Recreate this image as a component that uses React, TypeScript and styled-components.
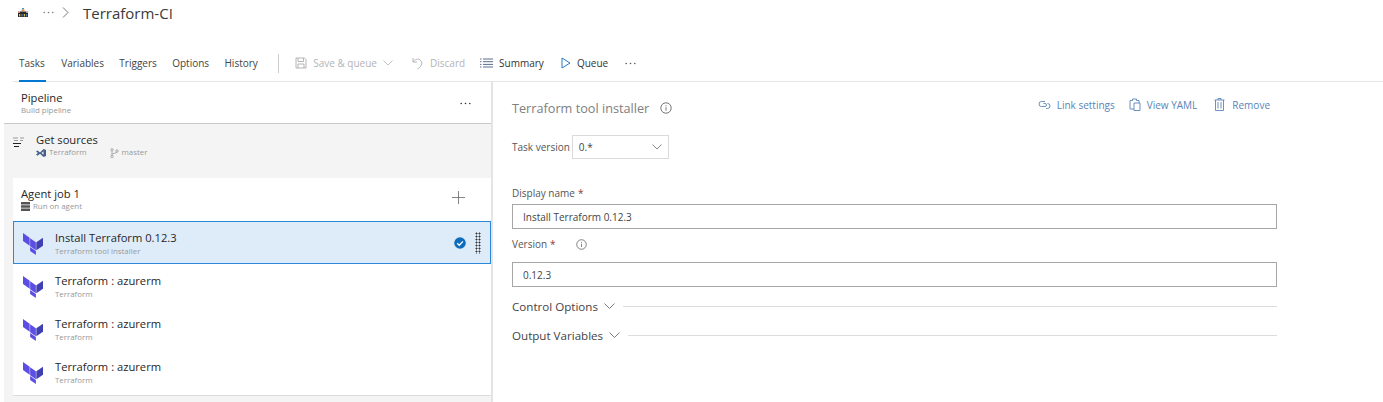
import React from "react";
import styled, { createGlobalStyle } from "styled-components";

const Global = createGlobalStyle`
  html, body { margin: 0; padding: 0; background: #fff; overflow: hidden; }
  body { font-family: "Open Sans", "Noto Sans", sans-serif; color: #333; }
`;

const Page = styled.div`
  width: 1383px;
  height: 402px;
  display: flex;
  flex-direction: column;
  overflow: hidden;
`;

const TitleBar = styled.div`
  height: 25px;
  padding-left: 18px;
  display: flex;
  align-items: center;
`;

const Crumbs = styled.div`
  display: flex;
  align-items: center;
  color: #777;
  gap: 15px;
`;

const CrumbArrow = styled.svg`
  margin-left: 8px;
`;

const Title = styled.h1`
  margin: 0 0 0 14px;
  font-size: 15px;
  font-weight: 400;
  color: #3a3a3a;
`;

const Toolbar = styled.div`
  margin: 25px 0 0 13px;
  height: 31px;
  border-bottom: 1px solid #e6e6e6;
  display: flex;
  align-items: center;
  font-size: 10px;
`;

const Tab = styled.div<{ $active?: boolean }>`
  height: 100%;
  margin: 0 7.4px -1px 6px;
  padding: 0 0 5px;
  display: flex;
  align-items: center;
  color: #444;
  box-sizing: border-box;
  border-bottom: ${(p) => (p.$active ? "2px solid #0078d4" : "2px solid transparent")};
  &:not(:first-child) { margin-left: 8px; }
  &:first-child { padding-right: 1px; }
`;

const Divider = styled.div`
  width: 1px;
  height: 19px;
  background: #ccc;
  margin: 0 16px 5px 13px;
`;

const Action = styled.div<{ $off?: boolean; $after: number }>`
  display: flex;
  align-items: center;
  gap: 6px;
  margin: 0 ${(p) => p.$after}px 5px 0;
  color: ${(p) => (p.$off ? "#b4b4b4" : "#333")};
`;

const MoreDots = styled.div`
  display: flex;
  margin-bottom: 5px;
`;

const Body = styled.div`
  flex: 1;
  display: grid;
  grid-template-columns: 493px 1fr;
  min-height: 0;
`;

const Left = styled.div`
  margin-left: 4px;
  background: #f4f4f4;
  border-right: 2px solid #e4e4e4;
  display: flex;
  flex-direction: column;
`;

const PipelineHead = styled.div`
  height: 42px;
  padding: 2px 20px 0 17px;
  box-sizing: border-box;
  background: #fff;
  border-bottom: 1px solid #c8c8c8;
  display: flex;
  align-items: center;
  justify-content: space-between;
`;

const Name = styled.div`
  font-size: 11.2px;
  line-height: 14px;
  color: #262626;
`;

const Sub = styled.div`
  font-size: 7.9px;
  line-height: 11px;
  color: #999;
  display: flex;
  align-items: center;
  gap: 3px;
`;

const Sources = styled.div`
  height: 54px;
  padding: 9px 0 0 9px;
  box-sizing: border-box;
  display: flex;
  gap: 12px;
`;

const SourceIcon = styled.svg`
  margin-top: 4px;
`;

const SourceMeta = styled.div`
  display: flex;
  gap: 23px;
`;

const Job = styled.div`
  margin-left: 9px;
  padding-bottom: 2px;
  background: #fff;
  border-bottom: 1px solid #dcdcdc;
`;

const JobHead = styled.div`
  height: 43px;
  padding: 0 26px 0 8px;
  box-sizing: border-box;
  display: flex;
  align-items: center;
  justify-content: space-between;
`;

const PlusIcon = styled.svg`
  margin-bottom: 4px;
`;

const TaskRow = styled.div<{ $selected?: boolean }>`
  height: 43px;
  box-sizing: border-box;
  padding-left: 9px;
  display: flex;
  align-items: center;
  gap: 12px;
  background: ${(p) => (p.$selected ? "#deecf9" : "#fff")};
  border: 1px solid ${(p) => (p.$selected ? "#2b88d8" : "transparent")};
`;

const TaskIcon = styled.svg`
  margin-top: 2px;
`;

const TaskText = styled.div`
  flex: 1;
  margin-top: 3px;
  ${Sub} { margin-top: 1px; }
`;

const Grip = styled.div`
  width: 6px;
  height: 22px;
  margin: 0 9px 0 -3px;
  background-image: radial-gradient(circle, #333 0.9px, transparent 1.1px);
  background-size: 3px 3px;
`;

const Right = styled.div`
  padding: 0 106px 0 19px;
  display: flex;
  flex-direction: column;
`;

const RightHead = styled.div`
  height: 53px;
  padding-bottom: 2px;
  box-sizing: border-box;
  display: flex;
  align-items: center;
  justify-content: space-between;
`;

const PanelTitle = styled.div`
  font-size: 12.7px;
  color: #808080;
  display: flex;
  align-items: center;
  gap: 11px;
`;

const Links = styled.div`
  display: flex;
  gap: 14px;
  margin: -6px 7px 0 0;
`;

const LinkItem = styled.div`
  display: flex;
  align-items: center;
  gap: 6px;
  font-size: 10px;
  color: #5a84b8;
  &:last-child { margin-left: 3px; }
`;

const VersionRow = styled.div`
  display: flex;
  align-items: center;
  gap: 2px;
  font-size: 10px;
  color: #555;
`;

const Select = styled.div`
  width: 97px;
  height: 24px;
  box-sizing: border-box;
  border: 1px solid #dadada;
  padding: 0 6px;
  display: flex;
  align-items: center;
  justify-content: space-between;
  color: #444;
`;

const Label = styled.div<{ $top: number }>`
  margin-top: ${(p) => p.$top}px;
  height: 14px;
  font-size: 10px;
  color: #555;
  display: flex;
  align-items: center;
  gap: 3px;
`;

const Star = styled.span`
  color: #8a3a40;
`;

const LabelInfo = styled.span`
  display: flex;
  margin-left: 17px;
`;

const Input = styled.div<{ $top: number }>`
  margin-top: ${(p) => p.$top}px;
  height: 25px;
  box-sizing: border-box;
  border: 1px solid #a6a6a6;
  padding: 0 10px;
  font-size: 10px;
  color: #444;
  display: flex;
  align-items: center;
`;

const Section = styled.div<{ $top: number }>`
  margin-top: ${(p) => p.$top}px;
  height: 16px;
  display: flex;
  align-items: center;
  gap: 6px;
  font-size: 11.6px;
  color: #444;
  &::after {
    content: "";
    flex: 1;
    height: 1px;
    margin-left: 2px;
    background: #ddd;
  }
`;

const TerraformIcon = () => (
  <TaskIcon width="20" height="22" viewBox="0.5 2.5 21 19" preserveAspectRatio="none">
    <path d="M0.500 2.500l7 4v7l-7-4z" fill="#5c4ee5" />
    <path d="M8 7l6 3.500v7L8 14z" fill="#5c4ee5" />
    <path d="M8 14.500l6 3.500v3.500L8 18z" fill="#5c4ee5" />
    <path d="M14.500 10.500l7-4v7l-7 4z" fill="#4040b2" />
  </TaskIcon>
);

const Chevron = ({ size = 10, color = "#666" }: { size?: number; color?: string }) => (
  <svg width={size} height={size * 0.6} viewBox="0 0 10 6" fill="none" stroke={color} strokeWidth="0.8">
    <path d="M0.500 0.500L5 5l4.500-4.500" />
  </svg>
);

const Info = ({ size = 12 }: { size?: number }) => (
  <svg width={size} height={size} viewBox="0 0 12 12" fill="none" stroke="#666" strokeWidth="0.9">
    <circle cx="6" cy="6" r="5.200" />
    <path d="M6 5.200v3.400M6 3.200v1" />
  </svg>
);

const Dots = ({ color = "#555" }: { color?: string }) => (
  <svg width="11" height="3" viewBox="0 0 11 3" fill={color}>
    <circle cx="1.200" cy="1.500" r="0.800" />
    <circle cx="5.500" cy="1.500" r="0.800" />
    <circle cx="9.800" cy="1.500" r="0.800" />
  </svg>
);

const OrgIcon = () => (
  <svg width="10" height="10" viewBox="0 0 10 10">
    <path d="M4 0h2v1.500H4z" fill="#4a90d0" />
    <path d="M3.500 1.500h3V3h-3z" fill="#e0954a" />
    <path d="M0 3h1v2H0zM9 3h1v2H9z" fill="#d9a0a0" />
    <path d="M1.500 3.500h7V5h-7zM0 5h10v4H0z" fill="#2a2622" />
    <path d="M1 6h1.300v2.500H1zM5.800 6h1.300v2.500H5.800z" fill="#e0b83c" />
    <path d="M3.300 6h1.300v2.500H3.300zM8 6h1.300v2.500H8z" fill="#3f7fc4" />
  </svg>
);

const App: React.FC = () => {
  return (
    <Page>
      <Global />
      <TitleBar>
        <Crumbs>
          <OrgIcon />
          <Dots color="#777" />
        </Crumbs>
        <CrumbArrow width="7" height="11" viewBox="0 0 7 11" fill="none" stroke="#777">
          <path d="M1 0.500l5 5-5 5" />
        </CrumbArrow>
        <Title>Terraform-CI</Title>
      </TitleBar>
      <Toolbar>
        <Tab $active>Tasks</Tab>
        <Tab>Variables</Tab>
        <Tab>Triggers</Tab>
        <Tab>Options</Tab>
        <Tab>History</Tab>
        <Divider />
        <Action $off $after={19}>
          <svg width="12" height="12" viewBox="0 0 12 12" fill="none" stroke="#b4b4b4">
            <path d="M1 1h8.500L11 2.500V11H1zM3 1v3.500h5.500V1M3 11V7h6v4" />
          </svg>
          Save &amp; queue
          <Chevron color="#b4b4b4" />
        </Action>
        <Action $off $after={15}>
          <svg width="12" height="13" viewBox="0 0 12 13" fill="none" stroke="#b4b4b4">
            <path d="M1 1v4h4M1 5c2-3 5-3.500 7-2 3 2 2.500 6-2.500 9" />
          </svg>
          Discard
        </Action>
        <Action $after={17}>
          <svg width="13" height="10" viewBox="0 0 13 10" stroke="#5a6f8a" strokeWidth="1">
            <path d="M0 1h1.500M3 1h10M0 3.700h1.500M3 3.700h10M0 6.400h1.500M3 6.400h10M0 9h1.500M3 9h10" />
          </svg>
          Summary
        </Action>
        <Action $after={17}>
          <svg width="10" height="12" viewBox="0 0 10 12" fill="none" stroke="#2b78c2">
            <path d="M1 1l8 5-8 5z" />
          </svg>
          Queue
        </Action>
        <MoreDots>
          <Dots />
        </MoreDots>
      </Toolbar>
      <Body>
        <Left>
          <PipelineHead>
            <div>
              <Name>Pipeline</Name>
              <Sub>Build pipeline</Sub>
            </div>
            <Dots color="#333" />
          </PipelineHead>
          <Sources>
            <SourceIcon width="11" height="11" viewBox="0 0 11 11" stroke="#222" strokeWidth="1">
              <path d="M0 1h5M7 1h4M1 3.500h4M7 3.500h3" stroke="#999" />
              <path d="M0 6.500h8M1 9.500h5" />
            </SourceIcon>
            <div>
              <Name>Get sources</Name>
              <SourceMeta>
                <Sub>
                  <svg width="10" height="8" viewBox="0 0 10 8" fill="#44608c">
                    <path d="M0 2.500l1.500-1L4 3.500 7.500 0 10 1v6L7.500 8 4 4.700 1.500 6.700 0 5.500 2 4zM7.500 2.200L5.500 4l2 1.800z" />
                  </svg>
                  Terraform
                </Sub>
                <Sub>
                  <svg width="9" height="10" viewBox="0 0 9 10" fill="none" stroke="#999" strokeWidth="0.8">
                    <circle cx="2" cy="1.800" r="1.200" />
                    <circle cx="2" cy="8.500" r="1.200" />
                    <circle cx="7" cy="3" r="1.200" />
                    <path d="M2 3v4.200M2 6.500c0-1.500 5-1 5-2.500" />
                  </svg>
                  master
                </Sub>
              </SourceMeta>
            </div>
          </Sources>
          <Job>
            <JobHead>
              <div>
                <Name>Agent job 1</Name>
                <Sub>
                  <svg width="9" height="9" viewBox="0 0 9 9" fill="#555">
                    <path d="M0 0h9v2.500H0zM0 3.200h9v2.500H0zM0 6.500h9V9H0z" />
                  </svg>
                  Run on agent
                </Sub>
              </div>
              <PlusIcon width="13" height="13" viewBox="0 0 13 13" stroke="#666" strokeWidth="0.8">
                <path d="M6.500 0v13M0 6.500h13" />
              </PlusIcon>
            </JobHead>
            <TaskRow $selected>
              <TerraformIcon />
              <TaskText>
                <Name>Install Terraform 0.12.3</Name>
                <Sub>Terraform tool installer</Sub>
              </TaskText>
              <svg width="12" height="12" viewBox="0 0 13 13">
                <circle cx="6.500" cy="6.500" r="6.300" fill="#0f6cbd" />
                <path d="M3.500 6.800l2.200 2.200 4-4.300" fill="none" stroke="#fff" strokeWidth="1.400" />
              </svg>
              <Grip />
            </TaskRow>
            {[0, 1, 2].map((i) => (
              <TaskRow key={i}>
                <TerraformIcon />
                <TaskText>
                  <Name>Terraform : azurerm</Name>
                  <Sub>Terraform</Sub>
                </TaskText>
              </TaskRow>
            ))}
          </Job>
        </Left>
        <Right>
          <RightHead>
            <PanelTitle>
              Terraform tool installer
              <Info />
            </PanelTitle>
            <Links>
              <LinkItem>
                <svg width="13" height="10" viewBox="0 0 13 10" fill="none" stroke="#5a84b8" strokeWidth="0.9">
                  <path d="M7 1.500H3.500a2.500 2.500 0 0 0 0 5H7a1.500 1.500 0 0 0 0-3H5.500" />
                  <path d="M8 8.500h1.500a2.500 2.500 0 0 0 0-5" />
                </svg>
                Link settings
              </LinkItem>
              <LinkItem>
                <svg width="12" height="13" viewBox="0 0 12 13" fill="none" stroke="#5a84b8" strokeWidth="0.9">
                  <path d="M1 2.500h2.500V1h4v1.500H10V5M5 5h6v7.500H5zM5 11H1V2.500" />
                </svg>
                View YAML
              </LinkItem>
              <LinkItem>
                <svg width="12" height="13" viewBox="0 0 12 13" fill="none" stroke="#5a84b8" strokeWidth="0.9">
                  <path d="M0.500 2h10M4 2V.500h3V2M1.500 2v10.500h8V2M4 4v6.500M7 4v6.500" />
                </svg>
                Remove
              </LinkItem>
            </Links>
          </RightHead>
          <VersionRow>
            Task version
            <Select>
              0.*
              <Chevron />
            </Select>
          </VersionRow>
          <Label $top={27}>
            Display name <Star>*</Star>
          </Label>
          <Input $top={4}>Install Terraform 0.12.3</Input>
          <Label $top={8}>
            Version <Star>*</Star>
            <LabelInfo>
              <Info size={11} />
            </LabelInfo>
          </Label>
          <Input $top={11}>0.12.3</Input>
          <Section $top={11}>
            Control Options
            <Chevron size={11} />
          </Section>
          <Section $top={13}>
            Output Variables
            <Chevron size={11} />
          </Section>
        </Right>
      </Body>
    </Page>
  );
};

export default App;
